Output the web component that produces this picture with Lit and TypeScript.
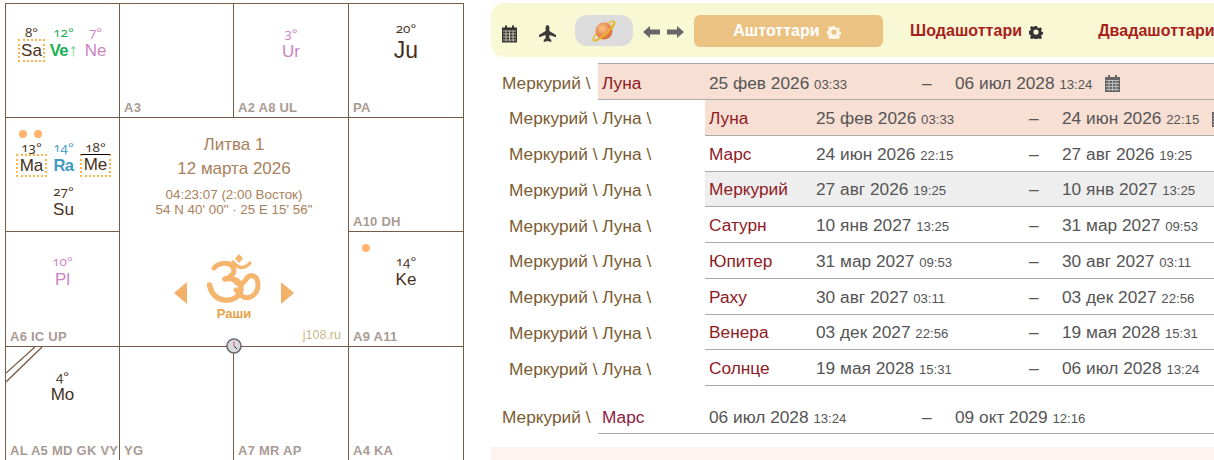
import { LitElement, html, css } from "lit";
import { customElement } from "lit/decorators.js";

type P = { d: string; n: string; c?: string; b?: boolean; box?: boolean; over?: boolean; arrow?: boolean; lg?: boolean; g?: number };

const gear = (color: string) => html`<svg class="gear" viewBox="0 0 16 16"><path fill=${color} fill-rule="evenodd" d="M6.6 1h2.8l.4 2 1.3.6 1.8-1.1 2 2-1.1 1.8.6 1.3 2 .4v2.8l-2 .4-.6 1.3 1.1 1.8-2 2-1.8-1.1-1.3.6-.4 2H6.6l-.4-2-1.3-.6-1.8 1.1-2-2 1.1-1.8-.6-1.3-2-.4V6.6l2-.4.6-1.3-1.1-1.8 2-2 1.8 1.1 1.3-.6zM8 5a3 3 0 1 0 0 6 3 3 0 0 0 0-6z"/></svg>`;

const cal = html`<svg class="cal" viewBox="0 0 15 17"><path fill="currentColor" d="M3 0h2v2h5V0h2v2h3v15H0V2h3z"/><g fill="#fff" opacity=".55"><rect x="1" y="5" width="13" height="1"/><rect x="1" y="8" width="13" height="1"/><rect x="1" y="11" width="13" height="1"/><rect x="1" y="14" width="13" height="1"/><rect x="3.5" y="5" width="1" height="11"/><rect x="7" y="5" width="1" height="11"/><rect x="10.5" y="5" width="1" height="11"/></g></svg>`;

@customElement("app-root")
export class AppRoot extends LitElement {
  static styles = css`
    :host { display: block; width: 1214px; height: 460px; overflow: hidden; background: #fff; font-family: "Liberation Sans", Arial, sans-serif; }
    .page { display: flex; align-items: flex-start; height: 460px; overflow: hidden; padding: 3px 0 0 5px; box-sizing: border-box; }
    .chart { position: relative; flex: none; width: 459px; height: 500px; display: grid; grid-template-columns: 114px 114px 115px 115px; grid-template-rows: 114px 114px 115px 114px; border-top: 1px solid #785c46; border-left: 1px solid #785c46; box-sizing: border-box; margin-right: 27px; }
    .cell { position: relative; border-right: 1px solid #785c46; border-bottom: 1px solid #785c46; box-sizing: border-box; display: flex; flex-direction: column; align-items: center; min-width: 0; }
    .lab { position: absolute; left: 4px; bottom: 2px; font-size: 13px; font-weight: bold; color: #a99b94; white-space: nowrap; line-height: 14px; letter-spacing: 0.25px; }
    .planets { display: flex; justify-content: center; flex-wrap: wrap; row-gap: 8px; }
    .planets.multi { width: 96px; margin-left: 2px; }
    .p { display: flex; flex-direction: column; align-items: center; width: 32px; }
    .deg { font-family: "Open Sans", "Liberation Sans", sans-serif; font-variant-numeric: oldstyle-nums; font-size: 13.5px; line-height: 13px; height: 13px; white-space: nowrap; }
    .nm { font-size: 17px; line-height: 23px; height: 23px; white-space: nowrap; box-sizing: border-box; }
    .nm.lg { font-size: 23px; }
    .nm.box { border: 2px dotted #fdb44e; padding: 0 1.5px; line-height: 19px; }
    .nm.bold { font-weight: bold; letter-spacing: -0.6px; font-size: 16.5px; }
    .nm.over { border-top: 1px solid #000; line-height: 20px; }
    .ar { font-weight: normal; font-size: 18px; color: #6fcf8f; margin-left: 1px; }
    .dots { position: absolute; top: 12px; left: 13px; display: flex; gap: 7px; }
    .dot { width: 8px; height: 8px; border-radius: 50%; background: #ffb36b; }
    .center { grid-column: 2 / span 2; grid-row: 2 / span 2; color: #a9815c; text-align: center; }
    .title { font-size: 17px; line-height: 24px; margin-top: 15px; }
    .date { font-size: 17px; line-height: 24px; }
    .small { font-size: 13.4px; line-height: 15px; }
    .small.first { margin-top: 6px; }
    .om-row { display: flex; align-items: flex-end; gap: 20px; margin-top: 37px; }
    .om { width: 54px; height: 50px; color: #f6b56d; }
    .tri { width: 13px; height: 22px; }
    .rashi { font-size: 13px; font-weight: bold; color: #e8a045; margin-top: 3px; line-height: 14px; }
    .site { position: absolute; right: 7px; bottom: 4px; font-size: 12.5px; color: #c7b78a; }
    .clock { position: absolute; left: 220px; top: 334px; width: 16px; height: 16px; }
    .strike { position: absolute; left: 0; top: 0; width: 36px; height: 36px; }
    .right { flex: 1; min-width: 0; overflow: hidden; }
    .toolbar { display: flex; align-items: center; height: 54px; width: 760px; background: #f9f8d5; border-radius: 13px 0 0 13px; box-sizing: border-box; padding: 0 0 0 11px; color: #333; white-space: nowrap; }
    .tb-icon { width: 15px; height: 18px; margin-top: 7px; color: #333; }
    .plane { width: 17px; height: 17px; margin-left: 22px; margin-top: 7px; color: #3a3a3a; }
    .planet-btn { width: 58px; height: 31px; border-radius: 12px; background: #dcdcdc; margin-left: 19px; display: flex; align-items: center; justify-content: center; margin-top: 1px; }
    .planet-btn svg { width: 24px; height: 24px; }
    .arrows { display: flex; gap: 7px; margin-left: 10px; margin-top: 4px; }
    .arrows svg { width: 17px; height: 12px; }
    .tab { display: flex; align-items: center; justify-content: center; gap: 7px; font-size: 16px; font-weight: bold; height: 32px; margin-left: 10px; margin-top: 1px; letter-spacing: 0.05px; padding-top: 1px; box-sizing: border-box; }
    .tab.on { width: 189px; background: #ebc282; border-radius: 6px; color: #fff; padding-right: 3px; }
    .tab.off { color: #a8201a; margin-left: 27px; }
    .tab.last { margin-left: 55px; }
    .gear { width: 14px; height: 14px; margin-top: 2px; }
    .rows { font-size: 17.3px; color: #555; }
    .row { display: flex; align-items: stretch; white-space: nowrap; }
    .main { height: 37px; margin-top: 6px; margin-left: 11px; }
    .sub { height: 35.75px; margin-left: 18px; }
    .pre { color: #7a5c32; flex: none; display: flex; align-items: center; padding-top: 4px; box-sizing: border-box; }
    .sub .pre { width: 196px; padding-top: 2px; }
    .main .pre { width: 96px; }
    .body { flex: none; display: flex; align-items: center; box-sizing: border-box; border-bottom: 1px solid #aaa; width: 620px; padding-top: 4px; }
    .sub .body { padding-top: 2px; }
    .main .body { border-top: 1px solid #aaa; }
    .pink { background: #f8dfd4; }
    .grey { background: #eeeeee; }
    .name { color: #8f1a1f; width: 111px; padding-left: 4px; box-sizing: border-box; flex: none; }
    .from { width: 213px; flex: none; }
    .dash { width: 33px; flex: none; }
    .to { flex: none; }
    .t { font-size: 13.2px; }
    .body .cal { width: 15px; height: 17px; margin-left: 13px; color: #666; flex: none; }
    .main.second { margin-top: 14px; height: 34px; }
    .main.second .body { border-top: none; padding-top: 1px; }
    .main.second .pre { padding-top: 1px; }
    .main.second .name { color: #8d1b3d; }
    .foot { margin-top: 13px; height: 20px; width: 760px; background: #fdf3f0; }
  `;

  planet(p: P) {
    return html`<div class="p" style="color:${p.c ?? "#46301c"}">
      <div class="deg" style="margin-bottom:${p.g ?? 0}px">${p.d}°</div>
      <div class="nm ${p.box ? "box" : ""} ${p.b ? "bold" : ""} ${p.over ? "over" : ""} ${p.lg ? "lg" : ""}">${p.n}${p.arrow ? html`<span class="ar">↑</span>` : ""}</div>
    </div>`;
  }

  cell(lab: string, ps: P[], top: number, extra: unknown = "") {
    return html`<div class="cell">
      <div class="planets ${ps.length > 1 ? "multi" : ""}" style="margin-top:${top}px">${ps.map((p) => this.planet(p))}</div>
      ${extra}
      ${lab ? html`<div class="lab">${lab}</div>` : ""}
    </div>`;
  }

  row(sub: boolean, pre: string, name: string, a: string, at: string, b: string, bt: string, cls = "") {
    return html`<div class="row ${sub ? "sub" : "main"} ${cls === "second" ? "second" : ""}">
      <div class="pre">${pre}</div>
      <div class="body ${cls === "pink" ? "pink" : ""} ${cls === "grey" ? "grey" : ""}">
        <div class="name">${name}</div>
        <div class="from">${a} <span class="t">${at}</span></div>
        <div class="dash">–</div>
        <div class="to">${b} <span class="t">${bt}</span></div>
        ${cls === "pink" ? cal : ""}
      </div>
    </div>`;
  }

  render() {
    const m = "Меркурий \\ Луна \\";
    const pu = "#cc84c0";
    return html`<div class="page">
      <div class="chart">
        ${this.cell("", [
          { d: "8", n: "Sa", box: true },
          { d: "12", n: "Ve", c: "#17b14f", b: true, arrow: true },
          { d: "7", n: "Ne", c: pu },
        ], 22)}
        ${this.cell("A3", [], 0)}
        ${this.cell("A2 A8 UL", [{ d: "3", n: "Ur", c: pu }], 23)}
        ${this.cell("PA", [{ d: "20", n: "Ju", lg: true, g: 4 }], 18)}
        ${this.cell("", [
          { d: "13", n: "Ma", box: true },
          { d: "14", n: "Ra", c: "#3f9ac4", b: true },
          { d: "18", n: "Me", box: true, over: true },
          { d: "27", n: "Su" },
        ], 23, html`<div class="dots"><div class="dot"></div><div class="dot"></div></div>`)}
        <div class="cell center">
          <div class="title">Литва 1</div>
          <div class="date">12 марта 2026</div>
          <div class="small first">04:23:07 (2:00 Восток)</div>
          <div class="small">54 N 40' 00" · 25 E 15' 56"</div>
          <div class="om-row">
            <svg class="tri" viewBox="0 0 13 22"><path fill="#f3b068" d="M13 0v22L0 11z"/></svg>
            <svg class="om" viewBox="0 0 54 50">
              <g fill="none" stroke="currentColor" stroke-linecap="round">
                <path stroke-width="5" d="M7 14C11 9 22 7 26 13C29 19 24 23 18 25"/>
                <path stroke-width="5.500" d="M18 25C28 23 34 28 34 35C34 42 26 47 17 46C9 45 4 39 2.500 31"/>
                <path stroke-width="5" d="M28 27C33 33 37 29 40 24C44 19 51 22 51 31C51 40 42 47 35 42C32 40 31 38 29 36"/>
                <path stroke-width="3.500" d="M26 8C31 15 38 15 43 9"/>
              </g>
              <path fill="currentColor" d="M32 0l4 4.500-4 4.500-4-4.500z"/>
            </svg>
            <svg class="tri" viewBox="0 0 13 22"><path fill="#f3b068" d="M0 0v22l13-11z"/></svg>
          </div>
          <div class="rashi">Раши</div>
          <div class="site">j108.ru</div>
        </div>
        ${this.cell("A10 DH", [], 0)}
        ${this.cell("A6 IC UP", [{ d: "10", n: "Pl", c: pu }], 23)}
        ${this.cell("A9 A11", [{ d: "14", n: "Ke" }], 23, html`<div class="dots"><div class="dot"></div></div>`)}
        ${this.cell("AL A5 MD GK VY", [{ d: "4", n: "Mo" }], 23, html`<svg class="strike" viewBox="0 0 36 36"><path stroke="#785c46" stroke-width="1.3" fill="none" d="M0 26L29 0M0 35L36 0"/></svg>`)}
        ${this.cell("YG", [], 0)}
        ${this.cell("A7 MR AP", [], 0)}
        ${this.cell("A4 KA", [], 0)}
        <svg class="clock" viewBox="0 0 16 16">
          <circle cx="8" cy="8" r="7" fill="#d8d8de" stroke="#6a6a72" stroke-width="1.6"/>
          <path stroke="#e05a6a" d="M8 3.500V8"/><path stroke="#333" d="M8 8l3 3"/>
        </svg>
      </div>
      <div class="right">
        <div class="toolbar">
          <svg class="tb-icon" viewBox="0 0 15 17"><path fill="currentColor" d="M3 0h2v2h5V0h2v2h3v15H0V2h3z"/><g fill="#f9f8d5" opacity=".7"><rect x="1" y="5" width="13" height="1"/><rect x="1" y="8" width="13" height="1"/><rect x="1" y="11" width="13" height="1"/><rect x="1" y="14" width="13" height="1"/><rect x="3.500" y="5" width="1" height="11"/><rect x="7" y="5" width="1" height="11"/><rect x="10.500" y="5" width="1" height="11"/></g></svg>
          <svg class="plane" viewBox="0 0 18 18"><path fill="currentColor" d="M9 0c1.200 0 2 1.500 2 3v3.400L18 10.500V13l-7-2.500v3.600L13 16v2l-4-1-4 1v-2l2-1.900v-3.600L0 13v-2.500l7-4.100V3C7 1.500 7.800 0 9 0z"/></svg>
          <div class="planet-btn">
            <svg viewBox="0 0 24 24">
              <defs><radialGradient id="pg" cx=".4" cy=".35" r=".8"><stop offset="0" stop-color="#fbc58a"/><stop offset="1" stop-color="#d9531e"/></radialGradient></defs>
              <ellipse cx="12" cy="12" rx="14" ry="4" transform="rotate(-42 12 12)" fill="none" stroke="#e9b92c" stroke-width="1.400"/>
              <circle cx="12" cy="12" r="8.500" fill="url(#pg)"/>
              <path d="M1.500 21.500C7 22 19 12 22.500 2.500" fill="none" stroke="#e9b92c" stroke-width="1.800"/>
            </svg>
          </div>
          <div class="arrows">
            <svg viewBox="0 0 17 12"><path fill="#666" d="M7 0v3.500h10v5H7V12L0 6z"/></svg>
            <svg viewBox="0 0 17 12"><path fill="#666" d="M10 0v3.500H0v5h10V12l7-6z"/></svg>
          </div>
          <div class="tab on">Аштоттари ${gear("#fdf6e8")}</div>
          <div class="tab off">Шодашоттари ${gear("#333")}</div>
          <div class="tab off last">Двадашоттари</div>
        </div>
        <div class="rows">
          ${this.row(false, "Меркурий \\", "Луна", "25 фев 2026", "03:33", "06 июл 2028", "13:24", "pink")}
          ${this.row(true, m, "Луна", "25 фев 2026", "03:33", "24 июн 2026", "22:15", "pink")}
          ${this.row(true, m, "Марс", "24 июн 2026", "22:15", "27 авг 2026", "19:25")}
          ${this.row(true, m, "Меркурий", "27 авг 2026", "19:25", "10 янв 2027", "13:25", "grey")}
          ${this.row(true, m, "Сатурн", "10 янв 2027", "13:25", "31 мар 2027", "09:53")}
          ${this.row(true, m, "Юпитер", "31 мар 2027", "09:53", "30 авг 2027", "03:11")}
          ${this.row(true, m, "Раху", "30 авг 2027", "03:11", "03 дек 2027", "22:56")}
          ${this.row(true, m, "Венера", "03 дек 2027", "22:56", "19 мая 2028", "15:31")}
          ${this.row(true, m, "Солнце", "19 мая 2028", "15:31", "06 июл 2028", "13:24")}
          ${this.row(false, "Меркурий \\", "Марс", "06 июл 2028", "13:24", "09 окт 2029", "12:16", "second")}
        </div>
        <div class="foot"></div>
      </div>
    </div>`;
  }
}
